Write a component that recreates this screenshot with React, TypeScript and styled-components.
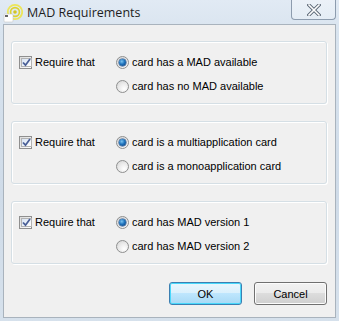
import styled, { createGlobalStyle } from 'styled-components';

const GlobalStyle = createGlobalStyle`
  html, body {
    margin: 0;
    padding: 0;
    background: #d6e2ee;
  }
  * {
    box-sizing: border-box;
  }
`;

const Window = styled.div`
  width: 339px;
  height: 321px;
  display: flex;
  flex-direction: column;
  background: linear-gradient(180deg, #e1eaf4 0%, #d9e4ef 10%, #cfdbe8 60%, #d6e1ec 100%);
  font-family: 'Liberation Sans', Arial, sans-serif;
  overflow: hidden;
`;

const TitleBar = styled.div`
  height: 24px;
  display: flex;
  align-items: flex-start;
  padding-left: 3px;
`;

const AppIcon = styled.svg`
  width: 20px;
  height: 20px;
  margin-top: 3px;
  flex-shrink: 0;
`;

const Title = styled.span`
  margin: 4px 0 0 4px;
  font-family: 'Open Sans', 'Liberation Sans', sans-serif;
  font-size: 12.5px;
  line-height: 17px;
  color: #1e1e1e;
  flex: 1;
`;

const CloseButton = styled.div`
  width: 45px;
  height: 20px;
  margin-right: 3px;
  border: 1px solid #8d9cae;
  border-top: none;
  border-radius: 0 0 4px 4px;
  background: linear-gradient(180deg, rgba(255, 255, 255, 0.35), rgba(235, 242, 249, 0.55));
  display: flex;
  align-items: center;
  justify-content: center;
`;

const Client = styled.div`
  flex: 1;
  margin: 0 3px 3px 3px;
  border: 1px solid #a9b3bd;
  background: #f0f0f0;
  padding: 16px 8px 0 7px;
  display: flex;
  flex-direction: column;
  gap: 17px;
`;

const Group = styled.div`
  height: 63px;
  border: 1px solid #d5dfe5;
  border-radius: 3px;
  box-shadow: inset 1px 1px 0 #ffffff, 1px 1px 0 #ffffff;
  display: flex;
  padding: 12px 0 0 7px;
`;

const Label = styled.label`
  display: flex;
  align-items: center;
  gap: 3px;
  height: 16px;
  font-size: 11px;
  color: #000;
`;

const CheckLabel = styled(Label)`
  width: 97px;
`;

const Options = styled.div`
  display: flex;
  flex-direction: column;
  gap: 8px;
`;

const Box = styled.span`
  width: 13px;
  height: 13px;
  border: 1px solid #8f8f8f;
  background: linear-gradient(135deg, #dcdcdc, #ffffff);
  padding: 1px;
  display: flex;
  flex-shrink: 0;
`;

const BoxInner = styled.span`
  flex: 1;
  border: 1px solid #b3b3b3;
  background: linear-gradient(135deg, #d8e4f4, #ffffff);
  display: flex;
  align-items: center;
  justify-content: center;
`;

const Radio = styled.span<{ $on?: boolean }>`
  width: 13px;
  height: 13px;
  border-radius: 50%;
  border: 1px solid #8e8f8f;
  background: radial-gradient(circle at 65% 70%, #ffffff 0%, #e8e8e8 55%, #cfcfcf 100%);
  display: flex;
  align-items: center;
  justify-content: center;
  flex-shrink: 0;
  &::after {
    content: '';
    width: 7px;
    height: 7px;
    border-radius: 50%;
    display: ${(p) => (p.$on ? 'block' : 'none')};
    background: radial-gradient(circle at 40% 35%, #7cc4f0 0%, #1f74bd 45%, #0c3570 100%);
    box-shadow: 0 0 0 0.5px #1d477f;
  }
`;

const ButtonRow = styled.div`
  display: flex;
  justify-content: flex-end;
  gap: 12px;
  margin-top: 1px;
`;

const Button = styled.button<{ $default?: boolean }>`
  width: 73px;
  height: 23px;
  font-family: 'Liberation Sans', Arial, sans-serif;
  font-size: 11px;
  color: #000;
  border-radius: 3px;
  border: 1px solid ${(p) => (p.$default ? '#3c7fb1' : '#707070')};
  box-shadow: inset 0 0 0 1px ${(p) => (p.$default ? '#48d8fb' : '#fcfcfc')};
  background: ${(p) =>
    p.$default
      ? 'linear-gradient(180deg, #eaf6fd 0%, #d9f0fc 49%, #bee6fd 50%, #a7d9f5 100%)'
      : 'linear-gradient(180deg, #f2f2f2 0%, #ebebeb 49%, #dddddd 50%, #cfcfcf 100%)'};
  padding: 0;
`;

const Check = () => (
  <Box>
    <BoxInner>
      <svg width="9" height="9" viewBox="0 0 9 9">
        <path d="M1 4.5 L3.5 7.2 L8 1" fill="none" stroke="#4a5f97" strokeWidth="1.8" />
      </svg>
    </BoxInner>
  </Box>
);

const groups = [
  ['card has a MAD available', 'card has no MAD available'],
  ['card is a multiapplication card', 'card is a monoapplication card'],
  ['card has MAD version 1', 'card has MAD version 2'],
];

const App = () => (
  <>
    <GlobalStyle />
    <Window>
      <TitleBar>
        <AppIcon viewBox="0 0 20 20">
          <circle cx="12" cy="9" r="7.2" fill="none" stroke="#ece65a" strokeWidth="1.8" />
          <circle cx="12" cy="9" r="4.4" fill="none" stroke="#ddd22e" strokeWidth="1.6" />
          <circle cx="12" cy="9" r="1.8" fill="#d2c522" />
          <rect x="1" y="11" width="9" height="8" rx="1" fill="#ffffff" stroke="#c8c8c8" strokeWidth="0.6" />
          <rect x="2" y="12" width="3" height="2" fill="#666" />
        </AppIcon>
        <Title>MAD Requirements</Title>
        <CloseButton>
          <svg width="14" height="12" viewBox="0 0 14 12">
            <path d="M2 1 L12 11 M12 1 L2 11" stroke="#5a6675" strokeWidth="3.4" strokeLinecap="square" />
            <path d="M2 1 L12 11 M12 1 L2 11" stroke="#ffffff" strokeWidth="1.6" strokeLinecap="square" />
          </svg>
        </CloseButton>
      </TitleBar>
      <Client>
        {groups.map(([a, b]) => (
          <Group key={a}>
            <CheckLabel>
              <Check />
              Require that
            </CheckLabel>
            <Options>
              <Label>
                <Radio $on />
                {a}
              </Label>
              <Label>
                <Radio />
                {b}
              </Label>
            </Options>
          </Group>
        ))}
        <ButtonRow>
          <Button $default>OK</Button>
          <Button>Cancel</Button>
        </ButtonRow>
      </Client>
    </Window>
  </>
);

export default App;
